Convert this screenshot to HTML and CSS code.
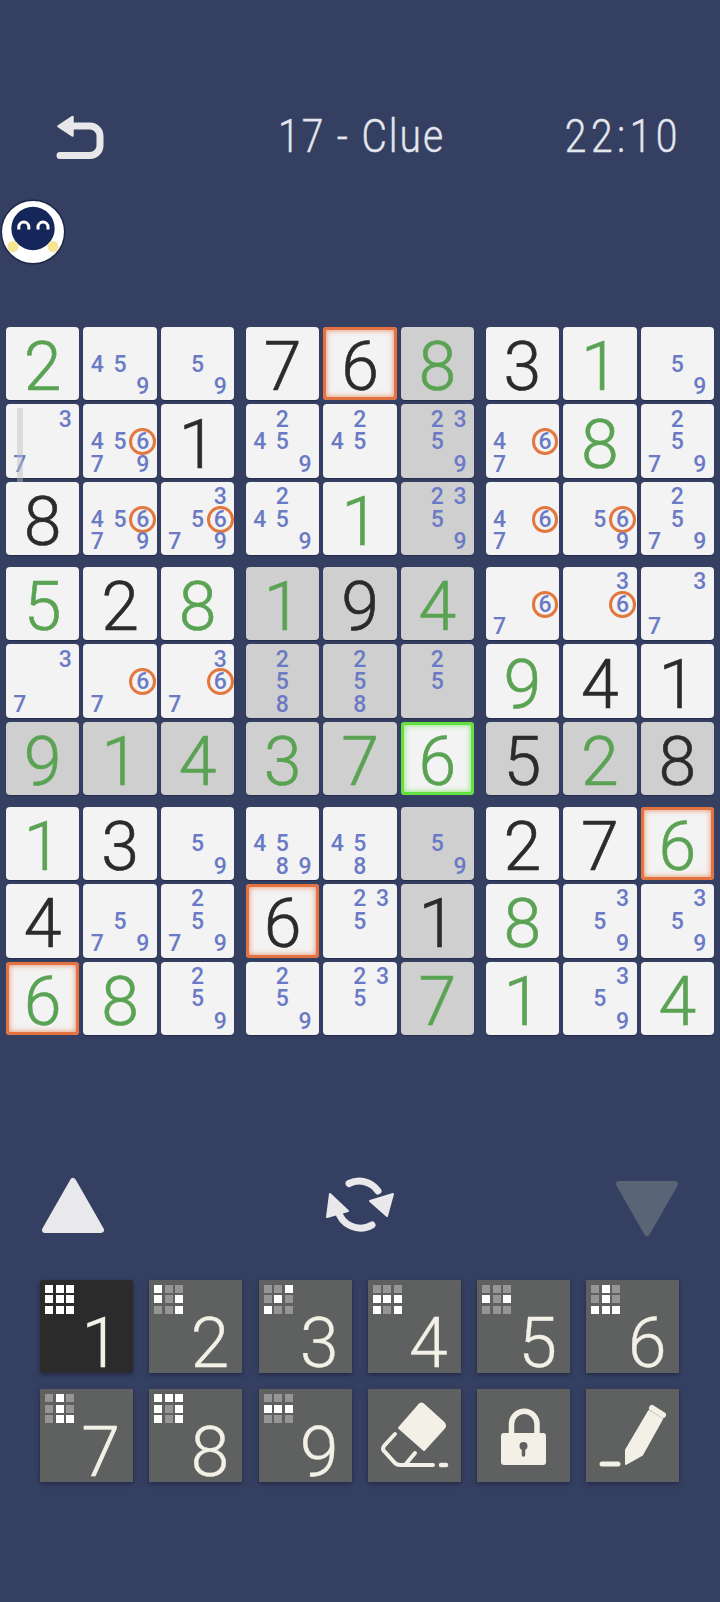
FILE: index.html
```html
<!DOCTYPE html>
<html lang="en">
<head>
    <meta charset="UTF-8">
    <meta name="viewport" content="width=device-width, initial-scale=1.0">
    <title>17 - Clue</title>
    <link rel="stylesheet" href="styles.css">
</head>
<body>
    <!-- Header -->
    <div class="header">
        <svg class="back" width="60" height="56" viewBox="50 110 60 56">
            <path d="M60 156.5H90a10 10 0 0 0 10-10V137a10 10 0 0 0-10-10H70" fill="none" stroke="#e8e8ea" stroke-width="7" stroke-linecap="round"/>
            <path d="M72.5 118L58.5 127.3L72.5 136.5Z" fill="#e8e8ea" stroke="#e8e8ea" stroke-width="2.5" stroke-linejoin="round"/>
        </svg>
        <div class="title">17 - Clue</div>
        <div class="time">22:10</div>
    </div>

    <svg class="avatar" width="66" height="66" viewBox="0 0 66 66">
        <circle cx="33" cy="33" r="31.7" fill="#fff" stroke="#1c2647" stroke-width="1.5"/>
        <circle cx="33" cy="29.5" r="21.7" fill="#15275a"/>
        <path d="M18.8 30.5V28a5 5 0 0 1 10 0V30.5M38 30.5V28a5 5 0 0 1 10 0V30.5" fill="none" stroke="#fff" stroke-width="3"/>
        <circle cx="13" cy="47.5" r="5.5" fill="#f6e493"/>
        <circle cx="53" cy="47.5" r="5.5" fill="#f6e493"/>
    </svg>

    <!-- Board -->
    <div class="board">
        <div class="block">
            <div class="cell green">2</div>
            <div class="cell notes"><span class="n4">4</span><span class="n5">5</span><span class="n9">9</span></div>
            <div class="cell notes"><span class="n5">5</span><span class="n9">9</span></div>
            <div class="cell notes"><span class="n3">3</span><span class="n7">7</span><div class="scrollbar"></div></div>
            <div class="cell notes"><span class="n4">4</span><span class="n5">5</span><span class="n6 ring">6</span><span class="n7">7</span><span class="n9">9</span></div>
            <div class="cell">1</div>
            <div class="cell">8</div>
            <div class="cell notes"><span class="n4">4</span><span class="n5">5</span><span class="n6 ring">6</span><span class="n7">7</span><span class="n9">9</span></div>
            <div class="cell notes"><span class="n3">3</span><span class="n5">5</span><span class="n6 ring">6</span><span class="n7">7</span><span class="n9">9</span></div>
        </div>
        <div class="block">
            <div class="cell">7</div>
            <div class="cell orange">6</div>
            <div class="cell green shade">8</div>
            <div class="cell notes"><span class="n2">2</span><span class="n4">4</span><span class="n5">5</span><span class="n9">9</span></div>
            <div class="cell notes"><span class="n2">2</span><span class="n4">4</span><span class="n5">5</span></div>
            <div class="cell notes shade"><span class="n2">2</span><span class="n3">3</span><span class="n5">5</span><span class="n9">9</span></div>
            <div class="cell notes"><span class="n2">2</span><span class="n4">4</span><span class="n5">5</span><span class="n9">9</span></div>
            <div class="cell green">1</div>
            <div class="cell notes shade"><span class="n2">2</span><span class="n3">3</span><span class="n5">5</span><span class="n9">9</span></div>
        </div>
        <div class="block">
            <div class="cell">3</div>
            <div class="cell green">1</div>
            <div class="cell notes"><span class="n5">5</span><span class="n9">9</span></div>
            <div class="cell notes"><span class="n4">4</span><span class="n6 ring">6</span><span class="n7">7</span></div>
            <div class="cell green">8</div>
            <div class="cell notes"><span class="n2">2</span><span class="n5">5</span><span class="n7">7</span><span class="n9">9</span></div>
            <div class="cell notes"><span class="n4">4</span><span class="n6 ring">6</span><span class="n7">7</span></div>
            <div class="cell notes"><span class="n5">5</span><span class="n6 ring">6</span><span class="n9">9</span></div>
            <div class="cell notes"><span class="n2">2</span><span class="n5">5</span><span class="n7">7</span><span class="n9">9</span></div>
        </div>

        <div class="block">
            <div class="cell green">5</div>
            <div class="cell">2</div>
            <div class="cell green">8</div>
            <div class="cell notes"><span class="n3">3</span><span class="n7">7</span></div>
            <div class="cell notes"><span class="n6 ring">6</span><span class="n7">7</span></div>
            <div class="cell notes"><span class="n3">3</span><span class="n6 ring">6</span><span class="n7">7</span></div>
            <div class="cell green shade">9</div>
            <div class="cell green shade">1</div>
            <div class="cell green shade">4</div>
        </div>
        <div class="block">
            <div class="cell green shade">1</div>
            <div class="cell shade">9</div>
            <div class="cell green shade">4</div>
            <div class="cell notes shade"><span class="n2">2</span><span class="n5">5</span><span class="n8">8</span></div>
            <div class="cell notes shade"><span class="n2">2</span><span class="n5">5</span><span class="n8">8</span></div>
            <div class="cell notes shade"><span class="n2">2</span><span class="n5">5</span></div>
            <div class="cell green shade">3</div>
            <div class="cell green shade">7</div>
            <div class="cell green lime">6</div>
        </div>
        <div class="block">
            <div class="cell notes"><span class="n6 ring">6</span><span class="n7">7</span></div>
            <div class="cell notes"><span class="n3">3</span><span class="n6 ring">6</span></div>
            <div class="cell notes"><span class="n3">3</span><span class="n7">7</span></div>
            <div class="cell green">9</div>
            <div class="cell">4</div>
            <div class="cell">1</div>
            <div class="cell shade">5</div>
            <div class="cell green shade">2</div>
            <div class="cell shade">8</div>
        </div>

        <div class="block">
            <div class="cell green">1</div>
            <div class="cell">3</div>
            <div class="cell notes"><span class="n5">5</span><span class="n9">9</span></div>
            <div class="cell">4</div>
            <div class="cell notes"><span class="n5">5</span><span class="n7">7</span><span class="n9">9</span></div>
            <div class="cell notes"><span class="n2">2</span><span class="n5">5</span><span class="n7">7</span><span class="n9">9</span></div>
            <div class="cell green orange">6</div>
            <div class="cell green">8</div>
            <div class="cell notes"><span class="n2">2</span><span class="n5">5</span><span class="n9">9</span></div>
        </div>
        <div class="block">
            <div class="cell notes"><span class="n4">4</span><span class="n5">5</span><span class="n8">8</span><span class="n9">9</span></div>
            <div class="cell notes"><span class="n4">4</span><span class="n5">5</span><span class="n8">8</span></div>
            <div class="cell notes shade"><span class="n5">5</span><span class="n9">9</span></div>
            <div class="cell orange">6</div>
            <div class="cell notes"><span class="n2">2</span><span class="n3">3</span><span class="n5">5</span></div>
            <div class="cell shade">1</div>
            <div class="cell notes"><span class="n2">2</span><span class="n5">5</span><span class="n9">9</span></div>
            <div class="cell notes"><span class="n2">2</span><span class="n3">3</span><span class="n5">5</span></div>
            <div class="cell green shade">7</div>
        </div>
        <div class="block">
            <div class="cell">2</div>
            <div class="cell">7</div>
            <div class="cell green orange">6</div>
            <div class="cell green">8</div>
            <div class="cell notes"><span class="n3">3</span><span class="n5">5</span><span class="n9">9</span></div>
            <div class="cell notes"><span class="n3">3</span><span class="n5">5</span><span class="n9">9</span></div>
            <div class="cell green">1</div>
            <div class="cell notes"><span class="n3">3</span><span class="n5">5</span><span class="n9">9</span></div>
            <div class="cell green">4</div>
        </div>
    </div>

    <!-- Controls -->
    <div class="controls">
        <svg width="70" height="64" viewBox="0 0 70 64">
            <path d="M35 6L63 55H7Z" fill="#e9e9eb" stroke="#e9e9eb" stroke-width="6" stroke-linejoin="round"/>
        </svg>
        <svg width="80" height="60" viewBox="0 3 80 60">
            <path d="M29 9.5A23 23 0 0 1 58 17M52 51A23 23 0 0 1 18 36" fill="none" stroke="#e9e9eb" stroke-width="7" stroke-linecap="round"/>
            <path d="M73 20L50 27L67 42ZM10 20L7 43L28 37Z" fill="#e9e9eb" stroke="#e9e9eb" stroke-width="2" stroke-linejoin="round"/>
        </svg>
        <svg width="70" height="64" viewBox="0 0 70 64">
            <path d="M35 58L63 9H7Z" fill="#5a6477" stroke="#5a6477" stroke-width="6" stroke-linejoin="round"/>
        </svg>
    </div>

    <!-- Number pad -->
    <div class="pad">
        <div class="key selected">1
            <div class="mini"><i class="on"></i><i class="on"></i><i class="on"></i><i class="on"></i><i class="on"></i><i class="on"></i><i class="on"></i><i class="on"></i><i class="on"></i></div>
        </div>
        <div class="key">2
            <div class="mini"><i class="on"></i><i></i><i></i><i class="on"></i><i></i><i class="on"></i><i></i><i></i><i class="on"></i></div>
        </div>
        <div class="key">3
            <div class="mini"><i></i><i></i><i class="on"></i><i></i><i class="on"></i><i></i><i class="on"></i><i></i><i></i></div>
        </div>
        <div class="key">4
            <div class="mini"><i></i><i></i><i></i><i class="on"></i><i class="on"></i><i class="on"></i><i class="on"></i><i></i><i class="on"></i></div>
        </div>
        <div class="key">5
            <div class="mini"><i></i><i></i><i></i><i class="on"></i><i></i><i class="on"></i><i></i><i></i><i></i></div>
        </div>
        <div class="key">6
            <div class="mini"><i></i><i class="on"></i><i></i><i></i><i class="on"></i><i></i><i class="on"></i><i class="on"></i><i class="on"></i></div>
        </div>
        <div class="key">7
            <div class="mini"><i></i><i class="on"></i><i></i><i></i><i class="on"></i><i></i><i></i><i class="on"></i><i class="on"></i></div>
        </div>
        <div class="key">8
            <div class="mini"><i class="on"></i><i class="on"></i><i class="on"></i><i class="on"></i><i></i><i class="on"></i><i class="on"></i><i></i><i class="on"></i></div>
        </div>
        <div class="key">9
            <div class="mini"><i></i><i></i><i></i><i class="on"></i><i class="on"></i><i class="on"></i><i></i><i></i><i></i></div>
        </div>
        <div class="key">
            <svg class="tool" width="93" height="93" viewBox="0 0 93 93">
                <path d="M55 15L76 34Q78 37 76 39L56 61L31 39L52 15Q53 14 55 15Z" fill="#f3f0e6" stroke="#f3f0e6" stroke-width="2" stroke-linejoin="round"/>
                <path d="M27 45L16 57Q14 60 16 62L27 74Q29 76 32 76H65M47 64L37 76" fill="none" stroke="#f3f0e6" stroke-width="4" stroke-linecap="round"/>
                <path d="M73 76H78" fill="none" stroke="#f3f0e6" stroke-width="4.5" stroke-linecap="round"/>
            </svg>
        </div>
        <div class="key">
            <svg class="tool" width="93" height="93" viewBox="0 0 93 93">
                <path d="M34.5 44V35A12.7 12.7 0 0 1 60 35V44" fill="none" stroke="#f3f0e6" stroke-width="5.5"/>
                <rect x="24" y="44" width="45" height="32" rx="3" fill="#f3f0e6"/>
                <circle cx="46.5" cy="57" r="4" fill="#5f6060"/>
                <path d="M46.5 58V66" stroke="#5f6060" stroke-width="3.5" stroke-linecap="round"/>
            </svg>
        </div>
        <div class="key">
            <svg class="tool" width="93" height="93" viewBox="0 0 93 93">
                <path d="M40 75V61L63 22L76 30L56 66Z" fill="#f3f0e6" stroke="#f3f0e6" stroke-width="2" stroke-linejoin="round"/>
                <path d="M66 19L77 26" stroke="#f3f0e6" stroke-width="6" stroke-linecap="round"/>
                <path d="M16 75H32" stroke="#f3f0e6" stroke-width="5" stroke-linecap="round"/>
            </svg>
        </div>
    </div>
</body>
</html>
```

FILE: styles.css
```css
/* General Styling */
* {
    margin: 0;
    padding: 0;
    box-sizing: border-box;
}

body {
    width: 720px;
    height: 1602px;
    overflow: hidden;
    background-color: #353f61;
    font-family: 'Roboto', sans-serif;
}

/* Header */
.header {
    display: grid;
    grid-template-columns: 228px 1fr auto;
    align-items: center;
    height: 60px;
    margin-top: 107px;
    padding: 0 38px 0 50px;
    color: #e4e6ee;
}

.back {
    display: block;
}

.title, .time {
    font-weight: 300;
    font-size: 39px;
    letter-spacing: 2px;
    -webkit-text-stroke: 0.3px currentColor;
    transform: scaleY(1.18);
}

.time {
    letter-spacing: 4.5px;
}

.avatar {
    display: block;
    margin-top: 32px;
}

/* Board */
.board {
    display: grid;
    grid-template-columns: repeat(3, 1fr);
    gap: 11.6px;
    margin: 62px 6px 0;
}

.block {
    display: grid;
    grid-template-columns: repeat(3, 1fr);
    grid-auto-rows: 73.3px;
    gap: 4.2px;
}

.cell {
    position: relative;
    display: flex;
    align-items: center;
    justify-content: center;
    padding-top: 7px;
    background-color: #f3f3f3;
    border-radius: 4px;
    box-shadow: 0 1px 1px rgba(20, 25, 50, 0.5);
    color: #2b2b2b;
    font-size: 68px;
    font-weight: 300;
    line-height: 1;
    -webkit-text-stroke: 0.6px currentColor;
}

.green {
    color: #5aa354;
}

.shade {
    background-color: #cfcfcf;
}

.orange {
    box-shadow: inset 0 0 0 3px #e4723f, inset 0 0 5px 4px rgba(228, 114, 63, 0.6);
}

.lime {
    box-shadow: inset 0 0 0 3px #62e040, inset 0 0 5px 4px rgba(98, 224, 64, 0.6);
}

.notes {
    display: grid;
    grid-template-columns: repeat(3, 22.7px);
    grid-template-rows: repeat(3, 22.5px);
    justify-content: start;
    align-content: start;
    align-items: stretch;
    padding: 3.5px 0 0 2.5px;
    color: #6a7ac4;
    font-size: 23px;
    font-weight: 500;
    -webkit-text-stroke: 0;
}

.notes span {
    position: relative;
    display: flex;
    align-items: center;
    justify-content: center;
}

.n1 { grid-area: 1 / 1; }
.n2 { grid-area: 1 / 2; }
.n3 { grid-area: 1 / 3; }
.n4 { grid-area: 2 / 1; }
.n5 { grid-area: 2 / 2; }
.n6 { grid-area: 2 / 3; }
.n7 { grid-area: 3 / 1; }
.n8 { grid-area: 3 / 2; }
.n9 { grid-area: 3 / 3; }

.ring::before {
    content: '';
    position: absolute;
    top: -2px;
    left: -2px;
    box-sizing: border-box;
    width: 26.7px;
    height: 26.7px;
    border: 3px solid #e2773f;
    border-radius: 50%;
}

.scrollbar {
    position: absolute;
    top: 4px;
    left: 11px;
    width: 6px;
    height: 77px;
    background: rgba(190, 190, 195, 0.45);
}

/* Controls */
.controls {
    display: flex;
    justify-content: space-between;
    align-items: center;
    height: 64px;
    margin-top: 140px;
    padding: 0 38px;
}

.controls svg {
    display: block;
}

/* Number pad */
.pad {
    display: grid;
    grid-template-columns: repeat(6, 93px);
    grid-auto-rows: 93px;
    gap: 16.3px;
    margin: 41px 0 0 40px;
}

.key {
    position: relative;
    display: flex;
    align-items: flex-end;
    justify-content: flex-end;
    padding-right: 13px;
    background-color: #5f6060;
    box-shadow: 0 2px 4px rgba(20, 25, 50, 0.55);
    color: #f3f0e6;
    font-size: 70px;
    font-weight: 300;
    line-height: 0.84;
    -webkit-text-stroke: 0.3px currentColor;
}

.key.selected {
    background-color: #2b2b2b;
    border-radius: 3px;
}

.mini {
    position: absolute;
    top: 5px;
    left: 5px;
    display: grid;
    grid-template-columns: repeat(3, 8px);
    grid-auto-rows: 8px;
    gap: 2.5px;
}

.mini i {
    display: block;
    background-color: #959595;
}

.mini i.on {
    background-color: #fff;
}

.tool {
    position: absolute;
    top: 0;
    left: 0;
}
```
